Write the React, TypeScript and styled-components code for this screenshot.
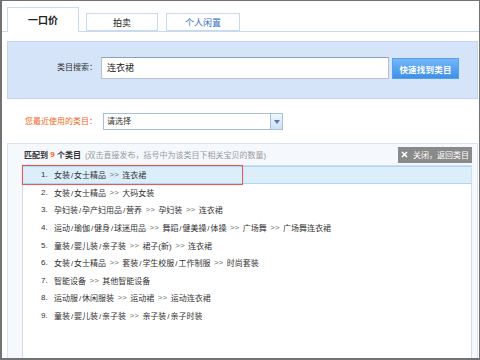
import React from "react";
import styled, { createGlobalStyle } from "styled-components";

const Global = createGlobalStyle`
  html, body { margin: 0; padding: 0; background: #fff; }
  body { font-family: "Liberation Sans", "Noto Sans CJK SC", sans-serif; }
  * { box-sizing: border-box; }
`;

const Frame = styled.div`
  width: 480px;
  height: 360px;
  border-style: solid;
  border-color: #727272;
  border-width: 1px 1px 2px 2px;
  background: #fff;
  display: flex;
  flex-direction: column;
  overflow: hidden;
  font-family: "Liberation Sans", "Noto Sans CJK SC", sans-serif;
`;

const TabBar = styled.div`
  display: flex;
  align-items: flex-end;
  height: 31px;
  padding-left: 5px;
  border-bottom: 1px solid #c9d9ef;
  flex-shrink: 0;
`;

const Tab = styled.div<{ $active?: boolean; $w: number; $gap: number; $blue?: boolean }>`
  width: ${(p) => p.$w}px;
  margin-left: ${(p) => p.$gap}px;
  height: ${(p) => (p.$active ? 25 : 18)}px;
  margin-bottom: ${(p) => (p.$active ? -1 : 0)}px;
  background: #fff;
  border: 1px solid #c9d9ef;
  border-bottom: ${(p) => (p.$active ? "none" : "1px solid #c9d9ef")};
  display: flex;
  align-items: center;
  justify-content: center;
  padding-bottom: ${(p) => (p.$active ? 2 : 0)}px;
  font-size: ${(p) => (p.$active ? 10 : 9)}px;
  font-weight: ${(p) => (p.$active ? 700 : 400)};
  color: ${(p) => (p.$blue ? "#3b6fc6" : "#222")};
`;

const SearchPanel = styled.div`
  margin: 9px 1px 0 5px;
  height: 58px;
  background: #d5e4f8;
  border: 1px solid #c3d5ee;
  padding-top: 15px;
  display: flex;
  align-items: flex-start;
  flex-shrink: 0;
`;

const FieldLabel = styled.div<{ $w: number; $orange?: boolean; $lh: number; $mr: number }>`
  width: ${(p) => p.$w}px;
  margin-right: ${(p) => p.$mr}px;
  text-align: right;
  font-size: 8px;
  line-height: ${(p) => p.$lh}px;
  color: ${(p) => (p.$orange ? "#f0661a" : "#333")};
  white-space: nowrap;
`;

const SearchInput = styled.div`
  width: 288px;
  height: 22px;
  background: #fff;
  border: 1px solid #b3c1d3;
  border-top-color: #8f9fb6;
  padding-left: 5px;
  font-size: 9px;
  line-height: 20px;
  color: #222;
`;

const FindButton = styled.div`
  width: 67px;
  height: 21px;
  margin: 1px 0 0 3px;
  border: 1px solid #5b9fe9;
  background: linear-gradient(#72b8fa, #3f8fe7);
  color: #fff;
  font-size: 8.5px;
  font-weight: 700;
  display: flex;
  align-items: center;
  justify-content: center;
  letter-spacing: 0.2px;
`;

const RecentRow = styled.div`
  display: flex;
  align-items: center;
  height: 44px;
  padding: 14px 0 13px 5px;
  flex-shrink: 0;
`;

const Select = styled.div`
  width: 180px;
  height: 17px;
  display: flex;
  border: 1px solid #a6bfe0;
  background: #fff;
`;

const SelectText = styled.div`
  flex: 1;
  padding-left: 3px;
  font-size: 8px;
  line-height: 15px;
  color: #333;
`;

const SelectArrow = styled.div`
  width: 12px;
  border-left: 1px solid #a6bfe0;
  background: linear-gradient(#f1f6fd, #cfdff4);
  display: flex;
  align-items: center;
  justify-content: center;
`;

const MatchPanel = styled.div`
  flex: 1;
  margin: 0 1px 0 5px;
  border: 1px solid #d8e4f4;
  border-bottom: none;
  background: #f5f8fd;
  display: flex;
  flex-direction: column;
  min-height: 0;
`;

const MatchHeader = styled.div`
  height: 21px;
  display: flex;
  align-items: center;
  padding: 0 5px 0 16px;
  font-size: 8px;
  white-space: nowrap;
  flex-shrink: 0;
`;

const Strong = styled.span<{ $orange?: boolean }>`
  font-weight: 700;
  color: ${(p) => (p.$orange ? "#f0661a" : "#333")};
`;

const Note = styled.span`
  color: #9a9a9a;
  margin-left: 4px;
`;

const CloseButton = styled.div`
  margin-left: auto;
  height: 16px;
  padding: 0 3px 0 3px;
  background: #8a8a8a;
  color: #fff;
  font-size: 8px;
  display: flex;
  align-items: center;
  gap: 5px;
`;

const List = styled.div`
  flex: 1;
  margin: 0 5px 0 14px;
  background: #fff;
  border: 1px solid #cddcf0;
  border-bottom: none;
  position: relative;
`;

const Row = styled.div<{ $selected?: boolean }>`
  height: 17.6px;
  display: flex;
  align-items: center;
  padding-left: 18px;
  font-size: 8px;
  color: #333;
  white-space: nowrap;
  background: ${(p) => (p.$selected ? "#ddeefb" : "transparent")};
  border-top: 1px solid ${(p) => (p.$selected ? "#acd8f4" : "transparent")};
  border-bottom: 1px solid ${(p) => (p.$selected ? "#acd8f4" : "transparent")};
`;

const Num = styled.span`
  width: 13px;
  flex-shrink: 0;
`;

const Sep = styled.span`
  color: #707070;
  margin: 0 3.5px;
`;

const Slash = styled.span`
  margin: 0 0.9px;
`;

const Highlight = styled.div`
  position: absolute;
  left: -1px;
  top: -1px;
  width: 221px;
  height: 20px;
  border: 1px solid #e25a5a;
  box-shadow: 0 0 1px #f2a9a9;
  pointer-events: none;
`;

const rows: string[][] = [
  ["女装/女士精品", "连衣裙"],
  ["女装/女士精品", "大码女装"],
  ["孕妇装/孕产妇用品/营养", "孕妇装", "连衣裙"],
  ["运动/瑜伽/健身/球迷用品", "舞蹈/健美操/体操", "广场舞", "广场舞连衣裙"],
  ["童装/婴儿装/亲子装", "裙子(新)", "连衣裙"],
  ["女装/女士精品", "套装/学生校服/工作制服", "时尚套装"],
  ["智能设备", "其他智能设备"],
  ["运动服/休闲服装", "运动裙", "运动连衣裙"],
  ["童装/婴儿装/亲子装", "亲子装/亲子时装"],
];

function Segment({ text }: { text: string }) {
  const pieces = text.split("/");
  return (
    <span>
      {pieces.map((p, k) => (
        <React.Fragment key={k}>
          {k > 0 && <Slash>/</Slash>}
          {p}
        </React.Fragment>
      ))}
    </span>
  );
}

export default function App() {
  return (
    <>
      <Global />
      <Frame>
        <TabBar>
          <Tab $active $w={72} $gap={0}>一口价</Tab>
          <Tab $w={72} $gap={7}>拍卖</Tab>
          <Tab $w={74} $gap={8} $blue>个人闲置</Tab>
        </TabBar>
        <SearchPanel>
          <FieldLabel $w={89} $lh={22} $mr={4}>类目搜索：</FieldLabel>
          <SearchInput>连衣裙</SearchInput>
          <FindButton>快速找到类目</FindButton>
        </SearchPanel>
        <RecentRow>
          <FieldLabel $w={90} $lh={17} $mr={6} $orange>您最近使用的类目：</FieldLabel>
          <Select>
            <SelectText>请选择</SelectText>
            <SelectArrow>
              <svg width="6" height="4" viewBox="0 0 6 4">
                <path d="M0 0 L6 0 L3 4 Z" fill="#4f78b4" />
              </svg>
            </SelectArrow>
          </Select>
        </RecentRow>
        <MatchPanel>
          <MatchHeader>
            <Strong>匹配到</Strong>
            <Strong $orange>&nbsp;9&nbsp;</Strong>
            <Strong>个类目</Strong>
            <Note>(双击直接发布，括号中为该类目下相关宝贝的数量)</Note>
            <CloseButton>
              <svg width="7" height="7" viewBox="0 0 7 7">
                <path d="M1 1 L6 6 M6 1 L1 6" stroke="#fff" strokeWidth="1.6" />
              </svg>
              <span>关闭，返回类目</span>
            </CloseButton>
          </MatchHeader>
          <List>
            {rows.map((parts, i) => (
              <Row key={i} $selected={i === 0}>
                <Num>{i + 1}.</Num>
                {parts.map((p, j) => (
                  <React.Fragment key={j}>
                    {j > 0 && <Sep>&gt;&gt;</Sep>}
                    <Segment text={p} />
                  </React.Fragment>
                ))}
              </Row>
            ))}
            <Highlight />
          </List>
        </MatchPanel>
      </Frame>
    </>
  );
}
